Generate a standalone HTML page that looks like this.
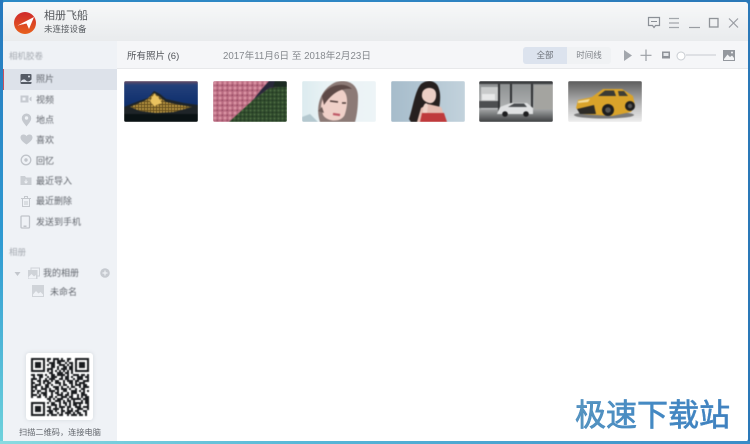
<!DOCTYPE html>
<html lang="zh"><head><meta charset="utf-8"><title>相册飞船</title>
<style>
*{box-sizing:border-box;margin:0;padding:0}
html,body{width:750px;height:444px;overflow:hidden;background:#fff}
body{font-family:"Liberation Sans","Noto Sans CJK SC",sans-serif;position:relative}
.a{position:absolute;white-space:nowrap}
.frame{position:absolute;left:0;top:0;width:750px;height:444px;background:linear-gradient(90deg,#2c8ac6,#2e86c4 50%,#2a78b8);}
.bl{position:absolute;left:0;top:0;width:3px;height:444px;background:linear-gradient(#2678bd,#2f9bd2 55%,#6fd2dc)}
.bb{position:absolute;left:0;top:441px;width:750px;height:3px;background:linear-gradient(90deg,#8adbe0,#58b8d8 40%,#3a8cc8)}
.win{position:absolute;left:2px;top:2px;width:746px;height:440px;background:#fff;border-radius:3px;overflow:hidden}
.title{position:absolute;left:0;top:0;width:746px;height:39px;background:linear-gradient(#f7f8f9,#e9ebed)}
.side{position:absolute;left:0;top:39px;width:115px;height:401px;background:#eff2f6}
.tool{position:absolute;left:115px;top:39px;width:631px;height:28px;background:#f5f6f8;border-bottom:1px solid #e7e8ea}
.act{position:absolute;left:0;top:67px;width:115px;height:21px;background:#dde2ea;border-left:2px solid #c9525e}
.it{font-size:9px;color:#63676e;line-height:12px;filter:blur(.4px)}
.sec{font-size:8.5px;color:#a4a9b0;line-height:12px;filter:blur(.4px)}
svg{position:absolute;display:block}
.th{position:absolute;top:81px;width:74px;height:41px;border-radius:2px;overflow:hidden}
.th svg{left:0;top:0;filter:blur(.45px)}
.ic{filter:blur(.3px)}
</style></head><body>
<div class="frame"></div>
<div class="win">
<div class="title"></div><div class="side"></div><div class="tool"></div><div class="act"></div>
</div>
<div class="bl"></div><div class="bb"></div>

<!-- logo -->
<svg class="ic" style="left:13px;top:11px" width="24" height="24" viewBox="0 0 24 24"><defs><linearGradient id="lg" x1="0" y1="0" x2="0" y2="1"><stop offset="0" stop-color="#cf2a2c"/><stop offset="1" stop-color="#e8601c"/></linearGradient></defs><circle cx="12" cy="12" r="11" fill="url(#lg)"/><path d="M4.500 14.500 L21 6 L16 18 L13.500 12.500 Z" fill="#fff"/><path d="M4.500 14.500 L13.500 12.500 L8 13.200Z" fill="#f7cfc4"/></svg>
<div class="a" style="left:44px;top:9px;font-size:11px;line-height:14px;color:#55585d;filter:blur(.35px)">相册飞船</div>
<div class="a" style="left:44px;top:23px;font-size:8.5px;line-height:12px;color:#55595e;filter:blur(.35px)">未连接设备</div>

<!-- window controls -->
<svg class="ic" style="left:646px;top:15px" width="94" height="16" viewBox="0 0 94 16" fill="none" stroke="#8b9096" stroke-width="1.2">
<path d="M2.500 2.500H13.500V10.500H9.500L8 12.500 6.500 10.500H2.500Z"/><path d="M5 6.500H11" stroke-width="1"/>
<path d="M23 3.500H33M23 8H33M23 12.500H33" stroke="#a3a7ac"/>
<path d="M43 12.500H54" stroke="#999da2"/>
<rect x="63.500" y="3.500" width="8.500" height="8.500" stroke="#8f9398" stroke-width="1.300"/>
<path d="M83 3.500L92 12.500M92 3.500L83 12.500" stroke="#999da2"/></svg>

<!-- sidebar -->
<div class="a sec" style="left:9px;top:50px">相机胶卷</div>
<svg class="ic" style="left:20px;top:73px" width="13" height="13" viewBox="0 0 13 13"><rect x=".5" y="1" width="11" height="10" rx="1" fill="#565c66"/><path d="M1 8 Q4 5 6 7.500T11.500 6.500V9H1Z" fill="#dde2ea"/><circle cx="9" cy="3.500" r="1" fill="#dde2ea"/></svg>
<div class="a it" style="left:36px;top:73px">照片</div>
<svg class="ic" style="left:20px;top:94px" width="13" height="11" viewBox="0 0 13 11"><rect x=".5" y="1.500" width="8" height="7" fill="#c7cbd1"/><rect x="2.500" y="3.500" width="3" height="3" fill="#eff2f6"/><path d="M9.500 4L11.500 2.500V7.500L9.500 6Z" fill="#c7cbd1"/></svg>
<div class="a it" style="left:36px;top:94px">视频</div>
<svg class="ic" style="left:21px;top:113px" width="11" height="14" viewBox="0 0 11 14"><path d="M5.500 13.500C3 10 .8 8 .8 5.200a4.700 4.700 0 0 1 9.400 0C10.200 8 8 10 5.500 13.500Z" fill="#c5c9cf"/><circle cx="5.500" cy="5" r="1.700" fill="#eff2f6"/></svg>
<div class="a it" style="left:36px;top:114px">地点</div>
<svg class="ic" style="left:20px;top:134px" width="13" height="11" viewBox="0 0 13 11"><path d="M6.500 10.500C3 8 .5 6 .5 3.500 .5 1.500 2 .5 3.500 .5 5 .5 6 1.300 6.500 2.200 7 1.300 8 .5 9.500 .5 11 .5 12.500 1.500 12.500 3.500 12.500 6 10 8 6.500 10.500Z" fill="#c5c9cf"/></svg>
<div class="a it" style="left:36px;top:134px">喜欢</div>
<svg class="ic" style="left:20px;top:154px" width="12" height="12" viewBox="0 0 12 12"><circle cx="6" cy="6" r="4.800" fill="none" stroke="#c0c4ca" stroke-width="1.300"/><circle cx="6" cy="6" r="1.700" fill="#c0c4ca"/></svg>
<div class="a it" style="left:36px;top:155px">回忆</div>
<svg class="ic" style="left:20px;top:175px" width="13" height="11" viewBox="0 0 13 11"><path d="M.5 1H5L6 2.500H11.500V10H.5Z" fill="#cbcfd4"/><path d="M6 4.500V8M4.500 6.500L6 8 7.500 6.500" stroke="#eff2f6" fill="none"/></svg>
<div class="a it" style="left:36px;top:175px">最近导入</div>
<svg class="ic" style="left:20px;top:195px" width="12" height="13" viewBox="0 0 12 13" fill="none" stroke="#c5c9ce"><path d="M1 3.500H11M4.500 3.500V1.500H7.500V3.500M2.500 3.500V11.500H9.500V3.500M5 6V10M7 6V10"/></svg>
<div class="a it" style="left:36px;top:195px">最近删除</div>
<svg class="ic" style="left:20px;top:215px" width="11" height="14" viewBox="0 0 11 14"><rect x="1" y="1" width="8.500" height="12" rx="1" fill="none" stroke="#c0c4ca" stroke-width="1.300"/><rect x="3.500" y="10.500" width="3" height="1.500" fill="#c0c4ca"/></svg>
<div class="a it" style="left:36px;top:216px">发送到手机</div>

<div class="a sec" style="left:9px;top:246px">相册</div>
<svg class="ic" style="left:14px;top:271px" width="7" height="6" viewBox="0 0 7 6"><path d="M.5 1H6.500L3.500 5Z" fill="#c3c7cd"/></svg>
<svg class="ic" style="left:27px;top:267px" width="14" height="13" viewBox="0 0 14 13"><rect x="1" y="3" width="9.500" height="9" fill="#cfd3d8"/><path d="M4 3V1H12.500V9H10.500" fill="none" stroke="#cfd3d8"/><path d="M1.500 10L4.500 7 7 9.500 9 8V11.500H1.500Z" fill="#eff2f6"/></svg>
<div class="a it" style="left:43px;top:267px">我的相册</div>
<svg class="ic" style="left:100px;top:268px" width="10" height="10" viewBox="0 0 10 10"><circle cx="5" cy="5" r="4.800" fill="#c6cad0"/><path d="M5 2.500V7.500M2.500 5H7.500" stroke="#eff2f6" stroke-width="1.200"/></svg>
<svg class="ic" style="left:32px;top:285px" width="12" height="12" viewBox="0 0 12 12"><rect width="12" height="12" fill="#d0d4d9"/><path d="M1 9.500L4 6 6.500 8.500 8.500 7 11 9.500V11H1Z" fill="#eff2f6"/></svg>
<div class="a it" style="left:50px;top:286px">未命名</div>

<!-- QR -->
<div class="a" style="left:26px;top:353px;width:67px;height:67px;background:#fff;border-radius:3px;box-shadow:0 0 4px rgba(120,130,140,.22)"></div>
<svg style="left:31px;top:358px;filter:blur(.4px)" width="58" height="58" viewBox="0 0 29 29" fill="none" stroke="#1b1d20" stroke-width="1">
<path d="M0 .5H29" stroke-dasharray="0 8 2 1 3 1 1 2 2 1 3 5"/>
<path d="M0 1.500H29" stroke-dasharray="0 8 1 2 1 1 4 1 1 3 1 6"/>
<path d="M0 2.500H29" stroke-dasharray="0 9 3 1 2 2 1 1 3 7"/>
<path d="M0 3.500H29" stroke-dasharray="0 8 1 1 2 2 3 1 1 1 2 7"/>
<path d="M0 4.500H29" stroke-dasharray="0 10 2 1 1 2 2 1 3 8"/>
<path d="M0 5.500H29" stroke-dasharray="0 8 3 2 1 1 3 1 2 8"/>
<path d="M0 6.500H29" stroke-dasharray="0 8 1 1 1 1 1 1 1 1 1 1 1 1 1 9"/>
<path d="M0 7.500H29" stroke-dasharray="0 9 2 2 3 1 2 1 1"/>
<path d="M0 8.500H29" stroke-dasharray="2 1 3 1 1 2 2 1 4 1 1 2 3 1 2 1 2"/>
<path d="M0 9.500H29" stroke-dasharray="0 1 1 2 2 2 1 1 3 2 1 1 2 1 1 2 3 1 2"/>
<path d="M0 10.500H29" stroke-dasharray="3 1 1 2 1 1 3 2 2 1 2 2 1 1 3 2 1"/>
<path d="M0 11.500H29" stroke-dasharray="1 2 2 1 3 1 1 1 2 2 1 1 3 1 2 2 3"/>
<path d="M0 12.500H29" stroke-dasharray="2 2 1 1 1 1 2 2 3 1 1 2 2 1 1 1 3 2"/>
<path d="M0 13.500H29" stroke-dasharray="1 1 3 2 2 1 1 3 1 1 2 2 1 1 3 1 2 1"/>
<path d="M0 14.500H29" stroke-dasharray="3 2 1 1 2 2 3 1 1 2 1 1 2 2 1 1 3"/>
<path d="M0 15.500H29" stroke-dasharray="1 1 1 2 3 1 1 2 2 1 3 1 1 2 1 2 2 2"/>
<path d="M0 16.500H29" stroke-dasharray="2 1 2 2 1 1 3 1 1 2 2 2 3 1 1 1 1 1 2"/>
<path d="M0 17.500H29" stroke-dasharray="1 2 1 1 3 2 1 1 2 1 1 2 1 1 3 2 2 2"/>
<path d="M0 18.500H29" stroke-dasharray="3 1 1 1 2 2 1 2 3 1 2 1 1 2 1 1 3"/>
<path d="M0 19.500H29" stroke-dasharray="1 2 2 2 1 1 2 1 1 2 3 1 2 2 1 1 1 1 2"/>
<path d="M0 20.500H29" stroke-dasharray="0 8 2 1 1 1 3 2 1 1 5 1 1"/>
<path d="M0 21.500H29" stroke-dasharray="0 9 1 2 3 1 1 1 2 1 1 3 1 1 2"/>
<path d="M0 22.500H29" stroke-dasharray="0 8 1 1 2 2 1 1 2 1 1 1 5 1 1"/>
<path d="M0 23.500H29" stroke-dasharray="0 10 3 1 1 2 1 1 1 1 2 1 1 3 1"/>
<path d="M0 24.500H29" stroke-dasharray="0 8 2 2 1 1 3 1 2 2 3 1 2"/>
<path d="M0 25.500H29" stroke-dasharray="0 9 1 1 3 1 1 2 1 1 1 2 3 2 1"/>
<path d="M0 26.500H29" stroke-dasharray="0 8 3 1 1 2 2 1 3 1 2 2 2 1"/>
<path d="M0 27.500H29" stroke-dasharray="0 9 2 2 1 1 1 1 3 1 1 1 2 2 1 1"/>
<path d="M0 28.500H29" stroke-dasharray="0 8 1 1 3 1 2 2 1 1 3 1 2 1 1 1"/>
<g fill="#fff" stroke="none"><rect width="8" height="8"/><rect x="21" width="8" height="8"/><rect y="21" width="8" height="8"/></g>
<rect x=".5" y=".5" width="6" height="6"/><rect x="22.500" y=".5" width="6" height="6"/><rect x=".5" y="22.500" width="6" height="6"/>
<g fill="#1b1d20" stroke="none"><rect x="2" y="2" width="3" height="3"/><rect x="24" y="2" width="3" height="3"/><rect x="2" y="24" width="3" height="3"/></g>
</svg>
<div class="a" style="left:19px;top:427px;font-size:8.2px;line-height:12px;color:#62666c;filter:blur(.35px)">扫描二维码，连接电脑</div>

<!-- toolbar -->
<div class="a" style="left:127px;top:50px;font-size:9.500px;line-height:14px;color:#53565b;filter:blur(.35px)">所有照片 (6)</div>
<div class="a" style="left:223px;top:50px;font-size:9.700px;line-height:14px;color:#85898e;filter:blur(.35px)">2017年11月6日 至 2018年2月23日</div>
<div class="a" style="left:523px;top:47px;width:44px;height:17px;background:#dce3ee;border-radius:3px 0 0 3px"></div>
<div class="a" style="left:567px;top:47px;width:44px;height:17px;background:#f0f2f4;border-radius:0 3px 3px 0"></div>
<div class="a" style="left:523px;top:47px;width:44px;height:17px;font-size:8.500px;line-height:17px;text-align:center;color:#6c7178;filter:blur(.35px)">全部</div>
<div class="a" style="left:567px;top:47px;width:44px;height:17px;font-size:8.500px;line-height:17px;text-align:center;color:#7d8187;filter:blur(.35px)">时间线</div>
<svg class="ic" style="left:620px;top:46px" width="120" height="18" viewBox="0 0 120 18"><path d="M4 4L12 9.500 4 15Z" fill="#a3a7ad"/><path d="M26 3.500V15M20.500 9.300H31.500" stroke="#9a9ea4" stroke-width="1.200"/>
<rect x="42" y="5.500" width="8" height="7" fill="#8f9399"/><rect x="43.500" y="7" width="5" height="3" fill="#e5e7ea"/>
<path d="M66 9H96" stroke="#c6cad0"/><circle cx="61" cy="10" r="4" fill="#fff" stroke="#c9cdd2"/>
<rect x="103" y="4" width="12" height="11" fill="#94989e"/><path d="M104 13L107.500 8.500 110 11 112 9.500 114 12V14H104Z" fill="#f3f4f6"/><circle cx="112" cy="6.500" r="1" fill="#f3f4f6"/></svg>

<!-- thumbs -->
<div class="th" style="left:124px"><svg width="74" height="41" viewBox="0 0 74 41"><defs><linearGradient id="t1" x1="0" y1="0" x2="0" y2="1"><stop offset="0" stop-color="#6a4c62"/><stop offset=".1" stop-color="#23407a"/><stop offset=".55" stop-color="#10306e"/><stop offset="1" stop-color="#0d1f3a"/></linearGradient><pattern id="lt" width="3" height="3" patternUnits="userSpaceOnUse"><rect width="3" height="3" fill="#6a5320"/><circle cx="1" cy="1" r=".9" fill="#e6bb55"/></pattern></defs><rect width="74" height="41" fill="url(#t1)"/><path d="M0 26Q14 20 24 17L30 10 36 13 42 18 60 22 74 24V41H0Z" fill="#1e2428"/><path d="M6 26L22 19 30 12 35 15 42 21 56 24 68 26 50 31 32 32 16 30Z" fill="url(#lt)"/><path d="M0 33H74V41H0Z" fill="#0a1214"/><path d="M26 20L30 13 34 16 38 22 30 25Z" fill="#e9c25f"/></svg></div>
<div class="th" style="left:213px"><svg width="74" height="41" viewBox="0 0 74 41"><defs><pattern id="fl" width="5" height="5" patternUnits="userSpaceOnUse"><rect width="5" height="5" fill="#b96a80"/><circle cx="2" cy="2" r="1.500" fill="#d892a2"/><circle cx="4.500" cy="4.500" r="1" fill="#8f4a60"/></pattern><pattern id="gr" width="4" height="4" patternUnits="userSpaceOnUse"><rect width="4" height="4" fill="#2f4a2c"/><circle cx="1.500" cy="1.500" r="1" fill="#4f6e42"/><circle cx="3.500" cy="3.500" r=".7" fill="#1c2f1c"/></pattern></defs><rect width="74" height="41" fill="url(#fl)"/><path d="M74 5V41H16L40 19 56 7Z" fill="url(#gr)"/><path d="M56 0H74V5L56 7 40 19 48 9Z" fill="#28283a"/><path d="M62 0H74V6H60Z" fill="#1c2a22"/></svg></div>
<div class="th" style="left:302px"><svg width="74" height="41" viewBox="0 0 74 41"><defs><linearGradient id="t3" x1="0" y1="0" x2="1" y2="0"><stop offset="0" stop-color="#dcebef"/><stop offset=".35" stop-color="#eaf3f5"/><stop offset="1" stop-color="#edf4f7"/></linearGradient></defs><rect width="74" height="41" fill="url(#t3)"/><path d="M18 41C13 26 18 8 34 1 46-2 56 3 56 16 56 26 55 34 53 41Z" fill="#8c7a76"/><path d="M19 26C20 13 30 6 38 8 47 10 46 24 43 33 41 41 26 42 21 34Z" fill="#efd0c8"/><path d="M20 15C26 4 42 0 50 8 42 7 32 9 22 24Z" fill="#5e4a47"/><path d="M28 20L36 21M40 22L44 22" stroke="#4f3c3a" stroke-width="1.400"/><path d="M31 33L38 34" stroke="#c05a68" stroke-width="2.200"/><path d="M0 41V36L8 33 16 41Z" fill="#b4c8cf"/><path d="M16 30L20 26 22 32Z" fill="#6d5c58"/></svg></div>
<div class="th" style="left:391px"><svg width="74" height="41" viewBox="0 0 74 41"><defs><linearGradient id="t4" x1="0" y1="0" x2="1" y2="0"><stop offset="0" stop-color="#a6bccb"/><stop offset="1" stop-color="#c2d2dc"/></linearGradient></defs><rect width="74" height="41" fill="url(#t4)"/><path d="M18 38C22 26 24 10 30 3 36-2 46-1 48 8 50 14 49 22 48 28L38 30 30 41H20Z" fill="#26201f"/><path d="M31 13C32 5 44 5 45 12 46 19 42 23 38 22 34 21 30 18 31 13Z" fill="#eccfc6"/><path d="M26 41L30 27 37 23 50 26 56 41Z" fill="#e5bdb2"/><path d="M31 32H53L56 41H29Z" fill="#bf3a3c"/><path d="M32 27C33 21 37 21 37 25L36 32H32Z" fill="#efd2c8"/></svg></div>
<div class="th" style="left:479px"><svg width="74" height="41" viewBox="0 0 74 41"><defs><linearGradient id="t5" x1="0" y1="0" x2="0" y2="1"><stop offset="0" stop-color="#8a8d8e"/><stop offset=".65" stop-color="#aeb1b1"/><stop offset="1" stop-color="#3e4042"/></linearGradient></defs><rect width="74" height="41" fill="url(#t5)"/><rect y="0" width="74" height="3" fill="#3c3e40"/><rect x="2" y="6" width="17" height="22" fill="#c9cbcb"/><rect x="19" y="3" width="2" height="27" fill="#2f3133"/><rect x="31" y="3" width="2" height="25" fill="#2f3133"/><rect x="52" y="3" width="2" height="27" fill="#2f3133"/><rect x="55" y="4" width="19" height="24" fill="#a4a4a0"/><path d="M0 20H19V27H0Z" fill="#4c4e50"/><rect x="3" y="13" width="13" height="6" fill="#e7e8e8"/><path d="M18 33L21 26 32 22 48 22 54 27 54 33Z" fill="#dfe1e2"/><path d="M29 26L35 22.500H45L48 26Z" fill="#4a4d50"/><circle cx="26" cy="33" r="2.800" fill="#1d1e20"/><circle cx="47" cy="33" r="2.800" fill="#1d1e20"/></svg></div>
<div class="th" style="left:568px"><svg width="74" height="41" viewBox="0 0 74 41"><defs><linearGradient id="t6" x1="0" y1="0" x2="0" y2="1"><stop offset="0" stop-color="#5c5c5c"/><stop offset=".6" stop-color="#bdbdbd"/><stop offset="1" stop-color="#eeeeee"/></linearGradient></defs><rect width="74" height="41" fill="url(#t6)"/><ellipse cx="36" cy="34" rx="30" ry="3.500" fill="#7a7a7a"/><path d="M8 27L10 19 24 16 35 8 54 8 65 15 67 25 63 31 44 35 14 33Z" fill="#d9a32a"/><path d="M30 15L37 9.500H46L48 15Z" fill="#3a3a34"/><path d="M50 10L56 10 60 15 51 15Z" fill="#3f3e36"/><path d="M9 28L26 24 28 33 12 33Z" fill="#2d2b26"/><path d="M10 20L22 18 20 21 10 22Z" fill="#f4dc9a"/><circle cx="40" cy="29" r="6" fill="#1e1e1e"/><circle cx="40" cy="29" r="2.800" fill="#565656"/><circle cx="62" cy="25" r="5" fill="#1e1e1e"/><circle cx="62" cy="25" r="2.200" fill="#565656"/></svg></div>

<!-- watermark -->
<div class="a" style="left:575px;top:395px;font-size:31px;line-height:36px;font-weight:400;-webkit-text-stroke:.6px #4a8cc3;font-family:'Noto Sans CJK SC',sans-serif;background:linear-gradient(90deg,#5a96bd,#4389c4 50%,#3f7fbf);-webkit-background-clip:text;background-clip:text;color:transparent;filter:blur(.3px)">极速下载站</div>
</body></html>
